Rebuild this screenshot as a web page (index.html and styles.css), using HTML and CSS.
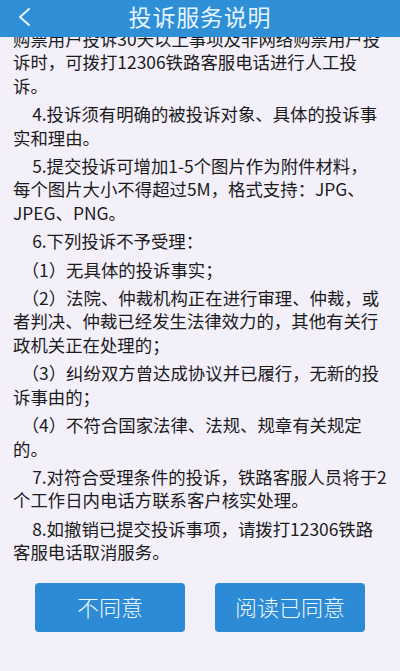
FILE: index.html
```html
<!DOCTYPE html>
<html lang="zh-CN">
<head>
<meta charset="utf-8">
<title>投诉服务说明</title>
<link rel="stylesheet" href="styles.css">
</head>
<body>
<div class="page">
  <header class="bar">
    <span class="back">
      <svg width="16" height="20" viewBox="0 0 16 20"><polyline points="12,2 3,10 12,18" fill="none" stroke="#eaf6ff" stroke-width="2" stroke-linecap="round" stroke-linejoin="round"/></svg>
    </span>
    <h1 class="title">投诉服务说明</h1>
  </header>
  <main class="scroll">
    <div class="doc">
      <p class="cont">购票用户投诉30天以上事项及非网络购票用户投诉时，可拨打12306铁路客服电话进行人工投诉。</p>
      <p>4.投诉须有明确的被投诉对象、具体的投诉事实和理由。</p>
      <p>5.提交投诉可增加1-5个图片作为附件材料，<br>每个图片大小不得超过5M，格式支持：JPG、JPEG、PNG。</p>
      <p>6.下列投诉不予受理：</p>
      <p class="sub">（1）无具体的投诉事实；</p>
      <p class="sub">（2）法院、仲裁机构正在进行审理、仲裁，或者判决、仲裁已经发生法律效力的，其他有关行政机关正在处理的；</p>
      <p class="sub">（3）纠纷双方曾达成协议并已履行，无新的投诉事由的；</p>
      <p class="sub">（4）不符合国家法律、法规、规章有关规定的。</p>
      <p>7.对符合受理条件的投诉，铁路客服人员将于2个工作日内电话方联系客户核实处理。</p>
      <p>8.如撤销已提交投诉事项，请拨打12306铁路客服电话取消服务。</p>
    </div>
    <div class="actions">
      <button class="btn">不同意</button>
      <button class="btn">阅读已同意</button>
    </div>
  </main>
</div>
</body>
</html>
```
FILE: styles.css
```css
* { box-sizing: border-box; }
html, body { margin: 0; padding: 0; }
body {
  width: 400px;
  height: 671px;
  overflow: hidden;
  background: #f4f0f9;
  font-family: "PingFang SC", "Noto Sans CJK SC", "Noto Sans", sans-serif;
}
.page {
  display: flex;
  flex-direction: column;
  height: 671px;
}
.bar {
  height: 37px;
  flex: none;
  background: #2e8fd6;
  display: flex;
  align-items: center;
  justify-content: center;
  position: relative;
  z-index: 2;
}
.back {
  position: absolute;
  left: 17px;
  top: 7px;
  display: flex;
}
.title {
  margin: 0 0 5px;
  font-size: 23px;
  font-weight: 400;
  color: #e6f5ff;
  letter-spacing: 0.8px;
  line-height: 30px;
}
.scroll {
  flex: 1;
  overflow: hidden;
}
.doc {
  margin-top: -10px;
  padding: 0 13px;
  color: #1b1b1d;
  font-size: 17.4px;
  line-height: 23.4px;
}
.doc p {
  margin: 0 0 5px;
  text-indent: 1.1em;
}
.doc p.cont { text-indent: 0; }
.doc p.sub { text-indent: 0.5em; }
.actions {
  display: flex;
  justify-content: center;
  gap: 30px;
  margin-top: 19px;
}
.btn {
  width: 150px;
  height: 49px;
  border: 0;
  border-radius: 4px;
  background: #2d8bd5;
  color: #eef8ff;
  font-family: "PingFang SC", "Noto Sans CJK SC", sans-serif;
  font-size: 22px;
  font-weight: 300;
  padding: 0 0 2px;
}
```
